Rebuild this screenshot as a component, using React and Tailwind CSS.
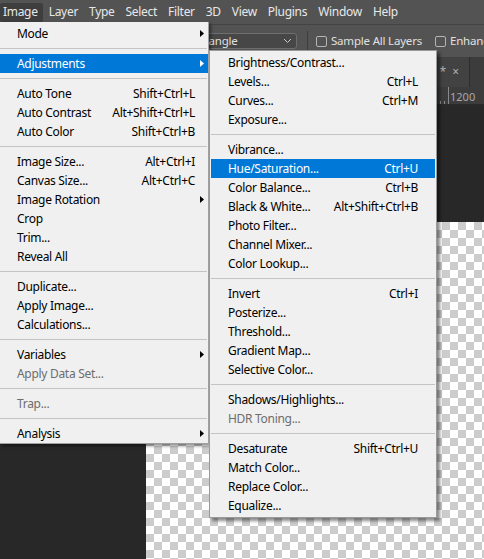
import React from 'react';

const menuBar = ['Image', 'Layer', 'Type', 'Select', 'Filter', '3D', 'View', 'Plugins', 'Window', 'Help'];

// main Image menu
const imageMenu = [
  { label: 'Mode', sub: true },
  { sep: true },
  { label: 'Adjustments', sub: true, active: true },
  { sep: true },
  { label: 'Auto Tone', key: 'Shift+Ctrl+L' },
  { label: 'Auto Contrast', key: 'Alt+Shift+Ctrl+L' },
  { label: 'Auto Color', key: 'Shift+Ctrl+B' },
  { sep: true },
  { label: 'Image Size...', key: 'Alt+Ctrl+I' },
  { label: 'Canvas Size...', key: 'Alt+Ctrl+C' },
  { label: 'Image Rotation', sub: true },
  { label: 'Crop' },
  { label: 'Trim...' },
  { label: 'Reveal All' },
  { sep: true },
  { label: 'Duplicate...' },
  { label: 'Apply Image...' },
  { label: 'Calculations...' },
  { sep: true },
  { label: 'Variables', sub: true },
  { label: 'Apply Data Set...', disabled: true },
  { sep: true },
  { label: 'Trap...', disabled: true },
  { sep: true },
  { label: 'Analysis', sub: true },
];

// Adjustments submenu
const adjustMenu = [
  { label: 'Brightness/Contrast...' },
  { label: 'Levels...', key: 'Ctrl+L' },
  { label: 'Curves...', key: 'Ctrl+M' },
  { label: 'Exposure...' },
  { sep: true },
  { label: 'Vibrance...' },
  { label: 'Hue/Saturation...', key: 'Ctrl+U', active: true },
  { label: 'Color Balance...', key: 'Ctrl+B' },
  { label: 'Black & White...', key: 'Alt+Shift+Ctrl+B' },
  { label: 'Photo Filter...' },
  { label: 'Channel Mixer...' },
  { label: 'Color Lookup...' },
  { sep: true },
  { label: 'Invert', key: 'Ctrl+I' },
  { label: 'Posterize...' },
  { label: 'Threshold...' },
  { label: 'Gradient Map...' },
  { label: 'Selective Color...' },
  { sep: true },
  { label: 'Shadows/Highlights...' },
  { label: 'HDR Toning...', disabled: true },
  { sep: true },
  { label: 'Desaturate', key: 'Shift+Ctrl+U' },
  { label: 'Match Color...' },
  { label: 'Replace Color...' },
  { label: 'Equalize...' },
];

function Arrow({ white }) {
  return (
    <svg width="4" height="7" viewBox="0 0 4 7" className={white ? 'fill-white' : 'fill-black'}>
      <path d="M0 0 L4 3.5 L0 7 Z" />
    </svg>
  );
}

function Checkbox() {
  return <span className="w-[11px] h-[11px] rounded-[2px] border border-[#b5b5b5] shrink-0" />;
}

function MainMenu() {
  return (
    <div className="absolute left-0 top-[22px] w-[209px] bg-[#f0f0f0] border-r border-b border-[#a0a0a0] pt-[2px] shadow-[2px_2px_3px_rgba(0,0,0,0.45)] text-[12px] tracking-[-0.3px]">
      {imageMenu.map((item, i) =>
        item.sep ? (
          <div key={i} className="h-[11px] flex items-center pr-[1px]">
            <div className="h-px w-full bg-[#c4c4c4]" />
          </div>
        ) : (
          <div
            key={i}
            className={`h-[19px] flex items-center pl-[17px] ${
              item.active ? 'bg-[#0078d7] text-white' : item.disabled ? 'text-[#6d6d6d]' : 'text-black'
            }`}
          >
            <span className="flex-1 whitespace-nowrap">{item.label}</span>
            {item.key && <span className="whitespace-nowrap">{item.key}</span>}
            <span className="w-[13px] flex justify-center shrink-0">
              {item.sub && <Arrow white={item.active} />}
            </span>
          </div>
        )
      )}
    </div>
  );
}

function SubMenu() {
  return (
    <div className="absolute left-[209px] top-[50px] w-[228px] bg-[#f0f0f0] border border-[#9a9a9a] px-px pt-[2px] pb-[2px] shadow-[3px_3px_3px_rgba(0,0,0,0.45)] text-[12px] tracking-[-0.3px]">
      {adjustMenu.map((item, i) =>
        item.sep ? (
          <div key={i} className="h-[11px] flex items-center">
            <div className="h-px w-full bg-[#c4c4c4]" />
          </div>
        ) : (
          <div
            key={i}
            className={`h-[19px] flex items-center px-[17px] ${
              item.active ? 'bg-[#0078d7] text-white' : item.disabled ? 'text-[#6d6d6d]' : 'text-black'
            }`}
          >
            <span className="flex-1 whitespace-nowrap">{item.label}</span>
            {item.key && <span className="whitespace-nowrap">{item.key}</span>}
          </div>
        )
      )}
    </div>
  );
}

export default function App() {
  return (
    <div className="relative w-[484px] h-[559px] overflow-hidden bg-[#282828] flex flex-col font-['Noto_Sans',sans-serif]">
      {/* menu bar */}
      <div className="h-[24px] bg-[#535353] flex items-center gap-[3px] text-[12px] tracking-[-0.3px] text-[#e8e8e8] shrink-0">
        {menuBar.map((m) => (
          <span
            key={m}
            className={`h-[19px] flex items-center pl-[3px] pr-[5px] shrink-0 ${m === 'Image' ? 'bg-[#3e3e3e] rounded-[2px]' : ''}`}
          >
            {m}
          </span>
        ))}
      </div>

      {/* options bar */}
      <div className="h-[33px] bg-[#535353] border-t border-[#444] flex items-center text-[11.5px] tracking-[-0.2px] text-[#e0e0e0] shrink-0">
        <div className="ml-[180px] w-[117px] h-[16px] shrink-0 rounded-[3px] border border-[#6e6e6e] bg-[#474747] flex items-center justify-between pl-[5px] pr-[4px]">
          <span>Rectangle</span>
          <svg width="9" height="6" viewBox="0 0 9 6" className="stroke-[#c8c8c8] fill-none">
            <path d="M1 1 L4.5 4.5 L8 1" />
          </svg>
        </div>
        <div className="ml-[10px] w-px h-[20px] bg-[#3d3d3d] shrink-0" />
        <div className="ml-[8px] flex items-center gap-[4px] shrink-0">
          <Checkbox />
          <span className="whitespace-nowrap">Sample All Layers</span>
        </div>
        <div className="ml-[13px] flex items-center gap-[4px] shrink-0">
          <Checkbox />
          <span className="whitespace-nowrap">Enhance Edge</span>
        </div>
      </div>

      {/* document tabs */}
      <div className="h-[30px] bg-[#3c3c3c] flex shrink-0">
        <div className="w-[470px] shrink-0 bg-[#424242] border-r border-[#2c2c2c] flex items-center justify-end pr-[10px] gap-[6px] text-[12px] text-[#b0b0b0]">
          <span>*</span>
          <span>×</span>
        </div>
      </div>

      {/* ruler */}
      <div className="h-[18px] bg-[#3c3c3c] border-b border-[#2a2a2a] flex items-end shrink-0 text-[11px] text-[#a8a8a8]">
        <div className="ml-[440px] flex items-end gap-[3px] h-full shrink-0">
          <span className="w-px h-[3px] bg-[#8a8a8a]" />
          <span className="w-px h-[3px] bg-[#8a8a8a]" />
          <span className="w-px h-full bg-[#8a8a8a]" />
          <span className="leading-none pb-[2px] -ml-[2px]">1200</span>
        </div>
      </div>

      {/* canvas */}
      <div className="flex-1 pl-[146px] pt-[117px] flex">
        <div className="flex-1 bg-[conic-gradient(#cccccc_25%,#ffffff_0_50%,#cccccc_0_75%,#ffffff_0)] bg-[length:16px_16px]" />
      </div>

      <MainMenu />
      <SubMenu />
    </div>
  );
}
